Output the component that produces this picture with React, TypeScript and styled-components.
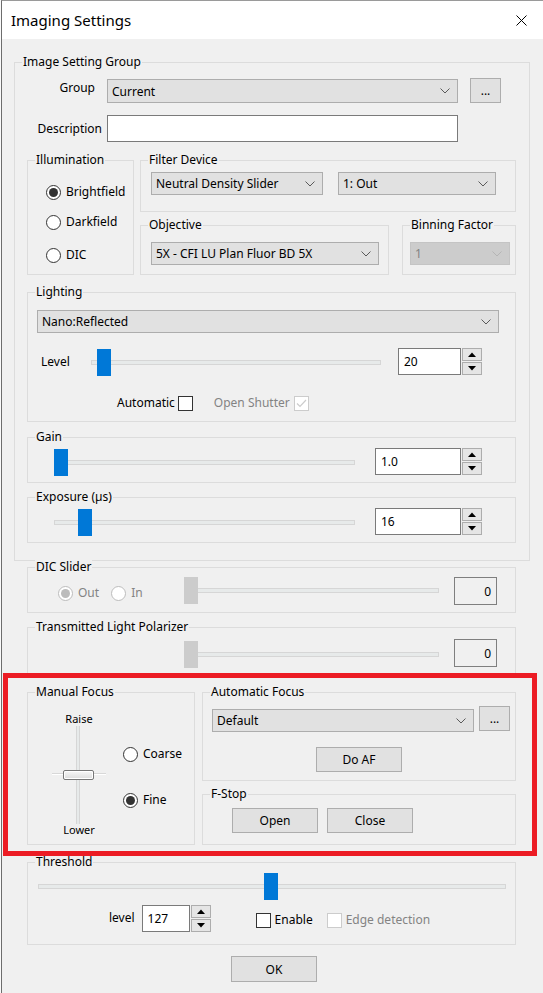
import React from 'react';
import styled, { createGlobalStyle } from 'styled-components';

const Global = createGlobalStyle`
  html, body { margin: 0; padding: 0; background: #fafafa; }
  body { font-family: "Noto Sans", "Open Sans", sans-serif; font-size: 12px; color: #000; }
  * { box-sizing: border-box; }
`;

const Screen = styled.div`
  position: relative;
  width: 543px;
  height: 993px;
  overflow: hidden;
  padding-left: 1px;
  background: #fafafa;
`;

const Window = styled.div`
  height: 100%;
  display: flex;
  flex-direction: column;
  border-left: 1px solid #6d6d6d;
  border-top: 1px solid #9a9a9a;
  background: #f0f0f0;
`;

const TitleBar = styled.div`
  flex: none;
  height: 38px;
  background: #fff;
  display: flex;
  align-items: center;
  justify-content: space-between;
  padding: 0 16px 0 9px;
`;

const Title = styled.span`
  font-size: 15px;
  line-height: 20px;
`;

const Client = styled.div`
  flex: 1;
  display: flex;
  flex-direction: column;
  align-items: flex-start;
`;

const Group = styled.div<{ $w: number; $h: number; $mt?: number; $ml?: number }>`
  position: relative;
  flex: none;
  width: ${(p) => p.$w}px;
  height: ${(p) => p.$h}px;
  margin-top: ${(p) => p.$mt ?? 0}px;
  margin-left: ${(p) => p.$ml ?? 0}px;
  border: 1px solid #dcdcdc;
`;

const Legend = styled.span`
  position: absolute;
  top: -9px;
  left: 7px;
  padding: 0 1px;
  line-height: 16px;
  background: #f0f0f0;
  white-space: nowrap;
`;

const Row = styled.div<{ $mt?: number; $pl?: number; $pt?: number }>`
  display: flex;
  align-items: flex-start;
  margin-top: ${(p) => p.$mt ?? 0}px;
  padding-left: ${(p) => p.$pl ?? 0}px;
  padding-top: ${(p) => p.$pt ?? 0}px;
`;

const Col = styled.div<{ $ml?: number; $gap?: number }>`
  display: flex;
  flex-direction: column;
  align-items: flex-start;
  margin-left: ${(p) => p.$ml ?? 0}px;
  gap: ${(p) => p.$gap ?? 0}px;
`;

const RadioPair = styled.div<{ $w: number; $mt?: number }>`
  flex: none;
  display: flex;
  align-items: center;
  width: ${(p) => p.$w}px;
  margin-top: ${(p) => p.$mt ?? 0}px;
`;

const Label = styled.span<{ $w?: number; $mt?: number; $ml?: number; $right?: boolean; $disabled?: boolean }>`
  flex: none;
  display: inline-block;
  ${(p) => (p.$w ? `width: ${p.$w}px;` : '')}
  margin-top: ${(p) => p.$mt ?? 0}px;
  margin-left: ${(p) => p.$ml ?? 0}px;
  text-align: ${(p) => (p.$right ? 'right' : 'left')};
  line-height: 16px;
  white-space: nowrap;
  color: ${(p) => (p.$disabled ? '#838383' : '#000')};
`;

const ComboBox = styled.div<{ $w: number; $h?: number; $mt?: number; $ml?: number; $disabled?: boolean }>`
  flex: none;
  width: ${(p) => p.$w}px;
  height: ${(p) => p.$h ?? 23}px;
  margin-top: ${(p) => p.$mt ?? 0}px;
  margin-left: ${(p) => p.$ml ?? 0}px;
  display: flex;
  align-items: center;
  justify-content: space-between;
  padding: 0 7px 0 4px;
  background: ${(p) => (p.$disabled ? '#cccccc' : '#e1e1e1')};
  border: 1px solid ${(p) => (p.$disabled ? '#c4c4c4' : '#adadad')};
  color: ${(p) => (p.$disabled ? '#838383' : '#000')};
  white-space: nowrap;
`;

const PushButton = styled.div<{ $w: number; $h?: number; $mt?: number; $ml?: number }>`
  flex: none;
  width: ${(p) => p.$w}px;
  height: ${(p) => p.$h ?? 25}px;
  margin-top: ${(p) => p.$mt ?? 0}px;
  margin-left: ${(p) => p.$ml ?? 0}px;
  display: flex;
  align-items: center;
  justify-content: center;
  background: #e1e1e1;
  border: 1px solid #adadad;
`;

const TextInput = styled.div<{ $w: number; $h?: number; $ml?: number }>`
  flex: none;
  width: ${(p) => p.$w}px;
  height: ${(p) => p.$h ?? 27}px;
  margin-left: ${(p) => p.$ml ?? 0}px;
  background: #fff;
  border: 1px solid #7a7a7a;
  display: flex;
  align-items: center;
  padding-left: 5px;
`;

const ValueBox = styled.div<{ $mt?: number; $ml?: number }>`
  flex: none;
  width: 43px;
  height: 28px;
  margin-top: ${(p) => p.$mt ?? 0}px;
  margin-left: ${(p) => p.$ml ?? 0}px;
  border: 1px solid #7f7f7f;
  display: flex;
  align-items: center;
  justify-content: flex-end;
  padding-right: 5px;
`;

const SpinWrap = styled.div<{ $mt?: number; $ml?: number }>`
  flex: none;
  display: flex;
  align-items: flex-start;
  margin-top: ${(p) => p.$mt ?? 0}px;
  margin-left: ${(p) => p.$ml ?? 0}px;
`;

const SpinButtons = styled.div`
  display: flex;
  flex-direction: column;
  gap: 1px;
  margin-left: 1px;
`;

const SpinBtn = styled.div`
  width: 20px;
  height: 13px;
  background: #e5e5e5;
  border: 1px solid #adadad;
  display: flex;
  align-items: center;
  justify-content: center;
`;

const SliderBox = styled.div<{ $w: number; $mt?: number; $ml?: number }>`
  position: relative;
  flex: none;
  width: ${(p) => p.$w}px;
  height: 27px;
  margin-top: ${(p) => p.$mt ?? 0}px;
  margin-left: ${(p) => p.$ml ?? 0}px;
`;

const Track = styled.div`
  position: absolute;
  left: 0;
  right: 0;
  top: 11px;
  height: 5px;
  background: #e7eaea;
  border: 1px solid #d6d6d6;
`;

const Thumb = styled.div<{ $disabled?: boolean }>`
  position: absolute;
  top: 0;
  width: 14px;
  height: 27px;
  background: ${(p) => (p.$disabled ? '#cccccc' : '#0078d7')};
`;

const RadioItem = styled.div<{ $mt?: number; $ml?: number }>`
  display: flex;
  align-items: center;
  gap: 5px;
  height: 16px;
  margin-top: ${(p) => p.$mt ?? 0}px;
  margin-left: ${(p) => p.$ml ?? 0}px;
  white-space: nowrap;
`;

const RadioCircle = styled.span<{ $checked?: boolean; $disabled?: boolean }>`
  flex: none;
  width: 15px;
  height: 15px;
  border-radius: 50%;
  border: 1px solid ${(p) => (p.$disabled ? '#bcbcbc' : '#333')};
  background: #fff;
  display: flex;
  align-items: center;
  justify-content: center;
  &::after {
    content: '';
    display: ${(p) => (p.$checked ? 'block' : 'none')};
    width: 9px;
    height: 9px;
    border-radius: 50%;
    background: ${(p) => (p.$disabled ? '#bcbcbc' : '#333')};
  }
`;

const CheckBox = styled.span<{ $disabled?: boolean; $ml?: number }>`
  flex: none;
  width: 15px;
  height: 15px;
  margin-left: ${(p) => p.$ml ?? 0}px;
  background: #fff;
  border: 1px solid ${(p) => (p.$disabled ? '#cccccc' : '#333')};
  display: flex;
  align-items: center;
  justify-content: center;
`;

const CheckRow = styled.div<{ $mt?: number; $ml?: number }>`
  display: flex;
  align-items: center;
  margin-top: ${(p) => p.$mt ?? 0}px;
  margin-left: ${(p) => p.$ml ?? 0}px;
  white-space: nowrap;
`;

const CenterCol = styled.div`
  display: flex;
  justify-content: center;
  width: 100%;
  margin-top: 15px;
`;

const VSliderCol = styled.div`
  flex: none;
  width: 54px;
  display: flex;
  flex-direction: column;
  align-items: center;
`;

const TinyText = styled.span`
  font-size: 11px;
  line-height: 14px;
  color: #000;
`;

const VSlider = styled.div`
  position: relative;
  width: 54px;
  height: 98px;
  margin: 0 0 -1px 0;
`;

const VTrack = styled.div`
  position: absolute;
  left: 24px;
  top: 0;
  bottom: 0;
  width: 4px;
  background: #e7eaea;
  border-left: 1px solid #d6d6d6;
  border-right: 1px solid #d6d6d6;
`;

const VTick = styled.div`
  position: absolute;
  left: 0;
  right: 0;
  top: 47px;
  height: 2px;
  background: #d8d8d8;
  border-bottom: 1px solid #fff;
`;

const VThumb = styled.div`
  position: absolute;
  left: 11px;
  top: 44px;
  width: 31px;
  height: 10px;
  border: 1px solid #777;
  border-radius: 2px;
  background: linear-gradient(#f8f8f8, #dcdcdc);
  box-shadow: inset 0 0 0 1px #fff;
`;

const RedMark = styled.div`
  position: absolute;
  left: 3px;
  top: 673px;
  width: 534px;
  height: 183px;
  border: 5px solid #ec1c24;
  pointer-events: none;
`;

const Chevron = ({ color = '#5a5a5a' }: { color?: string }) => (
  <svg width="10" height="6" viewBox="0 0 10 6">
    <path d="M0.5 0.5 L5 5 L9.5 0.5" fill="none" stroke={color} strokeWidth="1" />
  </svg>
);

const Combo = (p: { text: string; w: number; h?: number; mt?: number; ml?: number; disabled?: boolean }) => (
  <ComboBox $w={p.w} $h={p.h} $mt={p.mt} $ml={p.ml} $disabled={p.disabled}>
    <span>{p.text}</span>
    <Chevron color={p.disabled ? '#b5b5b5' : '#5a5a5a'} />
  </ComboBox>
);

const Tri = ({ up }: { up?: boolean }) => (
  <svg width="8" height="5" viewBox="0 0 8 5">
    <path d={up ? 'M0 5 L4 0.5 L8 5 Z' : 'M0 0 L8 0 L4 4.5 Z'} fill="#000" />
  </svg>
);

const Spin = (p: { value: string; w: number; mt?: number; ml?: number }) => (
  <SpinWrap $mt={p.mt} $ml={p.ml}>
    <TextInput $w={p.w}>{p.value}</TextInput>
    <SpinButtons>
      <SpinBtn><Tri up /></SpinBtn>
      <SpinBtn><Tri /></SpinBtn>
    </SpinButtons>
  </SpinWrap>
);

const Slider = (p: { w: number; pos: number; mt?: number; ml?: number; disabled?: boolean }) => (
  <SliderBox $w={p.w} $mt={p.mt} $ml={p.ml}>
    <Track />
    <Thumb $disabled={p.disabled} style={{ left: p.pos }} />
  </SliderBox>
);

const Radio = (p: { label: string; checked?: boolean; disabled?: boolean; mt?: number; ml?: number }) => (
  <RadioItem $mt={p.mt} $ml={p.ml}>
    <RadioCircle $checked={p.checked} $disabled={p.disabled} />
    <Label $disabled={p.disabled}>{p.label}</Label>
  </RadioItem>
);

const CheckMark = () => (
  <svg width="11" height="9" viewBox="0 0 11 9">
    <path d="M1 4.5 L4 7.5 L10 1" fill="none" stroke="#cccccc" strokeWidth="1.2" />
  </svg>
);

const CloseIcon = () => (
  <svg width="11" height="11" viewBox="0 0 11 11">
    <path d="M0.5 0.5 L10.5 10.5 M10.5 0.5 L0.5 10.5" stroke="#000" strokeWidth="1" />
  </svg>
);

export default function App() {
  return (
    <Screen>
      <Global />
      <Window>
        <TitleBar>
          <Title>Imaging Settings</Title>
          <CloseIcon />
        </TitleBar>
        <Client>
          <Group $w={516} $h={499} $mt={23} $ml={12}>
            <Legend>Image Setting Group</Legend>
            <Row $mt={15}>
              <Label $w={80} $right $mt={2}>Group</Label>
              <Combo text="Current" w={351} h={24} mt={1} ml={12} />
              <PushButton $w={31} $ml={12}>...</PushButton>
            </Row>
            <Row $mt={12}>
              <Label $w={87} $right $mt={6}>Description</Label>
              <TextInput $w={351} $ml={5} />
            </Row>
            <Row $mt={18} $pl={12}>
              <Group $w={107} $h={115}>
                <Legend>Illumination</Legend>
                <Col $ml={18}>
                  <Radio label="Brightfield" checked mt={23} />
                  <Radio label="Darkfield" mt={14} />
                  <Radio label="DIC" mt={17} />
                </Col>
              </Group>
              <Col $ml={6} $gap={13}>
                <Group $w={376} $h={52}>
                  <Legend>Filter Device</Legend>
                  <Row $pt={11} $pl={10}>
                    <Combo text="Neutral Density Slider" w={172} />
                    <Combo text="1: Out" w={158} ml={15} />
                  </Row>
                </Group>
                <Row>
                  <Group $w={249} $h={50}>
                    <Legend>Objective</Legend>
                    <Row $pt={16} $pl={10}>
                      <Combo text="5X - CFI LU Plan Fluor BD 5X" w={228} />
                    </Row>
                  </Group>
                  <Group $w={114} $h={50} $ml={13}>
                    <Legend>Binning Factor</Legend>
                    <Row $pt={16} $pl={7}>
                      <Combo text="1" w={100} disabled />
                    </Row>
                  </Group>
                </Row>
              </Col>
            </Row>
            <Group $w={489} $h={130} $mt={17} $ml={12}>
              <Legend>Lighting</Legend>
              <Row $pt={17} $pl={9}>
                <Combo text="Nano:Reflected" w={462} />
              </Row>
              <Row $mt={15} $pl={9}>
                <Label $w={54} $mt={6} style={{ paddingLeft: 4 }}>Level</Label>
                <Slider w={290} pos={6} mt={1} />
                <Spin value="20" w={63} ml={17} />
              </Row>
              <Row $mt={19} $pl={9}>
                <CheckRow $ml={80}>
                  <Label>Automatic</Label>
                  <CheckBox $ml={3} />
                </CheckRow>
                <CheckRow $ml={21}>
                  <Label $disabled>Open Shutter</Label>
                  <CheckBox $disabled $ml={4}><CheckMark /></CheckBox>
                </CheckRow>
              </Row>
            </Group>
            <Group $w={489} $h={46} $mt={15} $ml={12}>
              <Legend>Gain</Legend>
              <Row $pt={10} $pl={26}>
                <Slider w={301} pos={0} mt={1} />
                <Spin value="1.0" w={86} ml={20} />
              </Row>
            </Group>
            <Group $w={489} $h={46} $mt={14} $ml={12}>
              <Legend>Exposure (µs)</Legend>
              <Row $pt={10} $pl={26}>
                <Slider w={301} pos={24} mt={1} />
                <Spin value="16" w={86} ml={20} />
              </Row>
            </Group>
          </Group>

          <Group $w={489} $h={46} $mt={6} $ml={25}>
            <Legend>DIC Slider</Legend>
            <Row $pt={9} $pl={30}>
              <RadioPair $w={126} $mt={8}>
                <Radio label="Out" checked disabled />
                <Radio label="In" disabled ml={12} />
              </RadioPair>
              <Slider w={255} pos={0} disabled />
              <ValueBox $ml={15}>0</ValueBox>
            </Row>
          </Group>
          <Group $w={489} $h={48} $mt={14} $ml={25}>
            <Legend>Transmitted Light Polarizer</Legend>
            <Row $pt={13} $pl={156}>
              <Slider w={255} pos={0} disabled />
              <ValueBox $ml={15} $mt={-2}>0</ValueBox>
            </Row>
          </Group>

          <Row $mt={17} $pl={25}>
            <Group $w={168} $h={153}>
              <Legend>Manual Focus</Legend>
              <Row $pt={19} $pl={24}>
                <VSliderCol>
                  <TinyText>Raise</TinyText>
                  <VSlider>
                    <VTrack />
                    <VTick />
                    <VThumb />
                  </VSlider>
                  <TinyText>Lower</TinyText>
                </VSliderCol>
                <Col $ml={17}>
                  <Radio label="Coarse" mt={34} />
                  <Radio label="Fine" checked mt={30} />
                </Col>
              </Row>
            </Group>
            <Col $ml={7} $gap={13}>
              <Group $w={314} $h={89}>
                <Legend>Automatic Focus</Legend>
                <Row $pt={13} $pl={9}>
                  <Combo text="Default" w={262} mt={3} />
                  <PushButton $w={31} $ml={5}>...</PushButton>
                </Row>
                <CenterCol>
                  <PushButton $w={86}>Do AF</PushButton>
                </CenterCol>
              </Group>
              <Group $w={314} $h={51}>
                <Legend>F-Stop</Legend>
                <Row $pt={13} $pl={29}>
                  <PushButton $w={86}>Open</PushButton>
                  <PushButton $w={86} $ml={9}>Close</PushButton>
                </Row>
              </Group>
            </Col>
          </Row>

          <Group $w={489} $h={83} $mt={17} $ml={25}>
            <Legend>Threshold</Legend>
            <Row $pt={10} $pl={10}>
              <Slider w={468} pos={226} />
            </Row>
            <Row $mt={5} $pl={81}>
              <Label $mt={5}>level</Label>
              <Spin value="127" w={48} ml={7} />
              <CheckRow $ml={45} $mt={7}>
                <CheckBox />
                <Label $ml={4}>Enable</Label>
              </CheckRow>
              <CheckRow $ml={14} $mt={7}>
                <CheckBox $disabled />
                <Label $ml={4} $disabled>Edge detection</Label>
              </CheckRow>
            </Row>
          </Group>

          <PushButton $w={86} $h={26} $mt={11} $ml={229}>OK</PushButton>
        </Client>
      </Window>
      <RedMark />
    </Screen>
  );
}
